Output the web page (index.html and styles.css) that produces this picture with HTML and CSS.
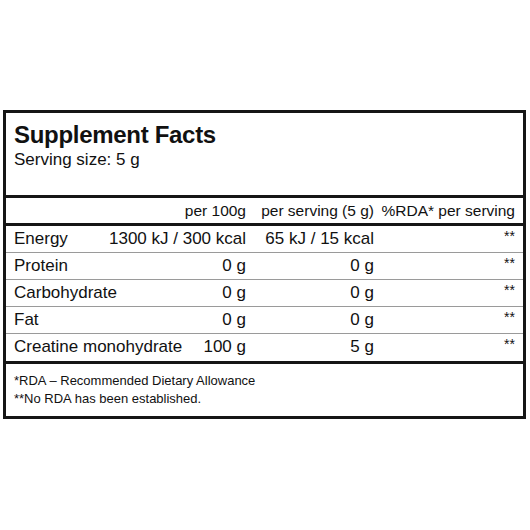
FILE: index.html
```html
<!DOCTYPE html>
<html lang="en">
<head>
    <meta charset="UTF-8">
    <meta name="viewport" content="width=device-width, initial-scale=1.0">
    <title>Supplement Facts</title>
    <link rel="stylesheet" href="styles.css">
</head>
<body>
    <div class="facts">
        <!-- Cabecera -->
        <div class="facts-top">
            <h1>Supplement Facts</h1>
            <div class="serving">Serving size: 5 g</div>
        </div>

        <!-- Columnas -->
        <div class="row head-row">
            <div class="cell-main"><span></span><span>per 100g</span></div>
            <div class="cell-serv">per serving (5 g)</div>
            <div class="cell-rda">%RDA* per serving</div>
        </div>

        <div class="rows">
            <div class="row">
                <div class="cell-main"><span>Energy</span><span>1300 kJ / 300 kcal</span></div>
                <div class="cell-serv">65 kJ / 15 kcal</div>
                <div class="cell-rda stars">**</div>
            </div>
            <div class="row">
                <div class="cell-main"><span>Protein</span><span>0 g</span></div>
                <div class="cell-serv">0 g</div>
                <div class="cell-rda stars">**</div>
            </div>
            <div class="row">
                <div class="cell-main"><span>Carbohydrate</span><span>0 g</span></div>
                <div class="cell-serv">0 g</div>
                <div class="cell-rda stars">**</div>
            </div>
            <div class="row">
                <div class="cell-main"><span>Fat</span><span>0 g</span></div>
                <div class="cell-serv">0 g</div>
                <div class="cell-rda stars">**</div>
            </div>
            <div class="row">
                <div class="cell-main"><span>Creatine monohydrate</span><span>100 g</span></div>
                <div class="cell-serv">5 g</div>
                <div class="cell-rda stars">**</div>
            </div>
        </div>

        <!-- Notas -->
        <div class="notes">
            <p>*RDA – Recommended Dietary Allowance</p>
            <p>**No RDA has been established.</p>
        </div>
    </div>
</body>
</html>
```

FILE: styles.css
```css
* {
    margin: 0;
    padding: 0;
    box-sizing: border-box;
}

body {
    background-color: #fff;
    color: #111;
    font-family: 'Liberation Sans', Arial, sans-serif;
}

.facts {
    width: 523px;
    margin: 110px 0 0 3px;
    border: 3px solid #161616;
}

.facts-top {
    height: 85px;
    padding: 8px 8px 0;
    border-bottom: 3px solid #161616;
}

h1 {
    font-size: 24px;
    font-weight: bold;
    line-height: 28px;
    letter-spacing: -0.3px;
}

.serving {
    font-size: 17px;
    line-height: 22px;
}

.row {
    display: flex;
    height: 27px;
    padding: 0 8px;
    font-size: 17px;
    line-height: 26px;
    white-space: nowrap;
    border-bottom: 1px solid #9a9a9a;
}

.row:last-child {
    border-bottom: none;
}

.head-row {
    height: 28px;
    padding-top: 1px;
    font-size: 15.5px;
    line-height: 24px;
    border-bottom: 3px solid #161616;
}

.rows {
    border-bottom: 3px solid #161616;
}

.cell-main {
    flex: 1;
    display: flex;
    justify-content: space-between;
}

.cell-serv {
    width: 128px;
    text-align: right;
}

.cell-rda {
    width: 141px;
    text-align: right;
}

.stars {
    font-size: 14px;
    line-height: 20px;
}

.notes {
    padding: 8px 8px 8px;
    font-size: 13px;
    line-height: 18px;
}
```
